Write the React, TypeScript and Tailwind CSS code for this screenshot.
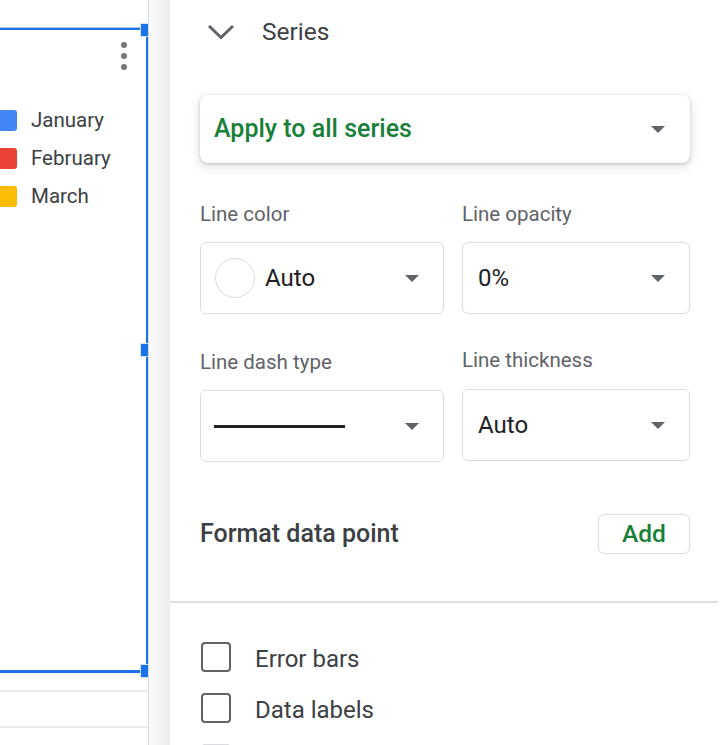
import { ReactNode } from "react";

const Caret = () => (
  <svg width="14" height="7" viewBox="0 0 14 7" className="shrink-0">
    <path d="M0 0 L14 0 L7 7 Z" fill="#5f6368" />
  </svg>
);

function SelectBox({ children, className }: { children: ReactNode; className?: string }) {
  return (
    <div
      className={`flex h-[72px] items-center justify-between rounded-[6px] border border-[#dadce0] bg-white pr-[24px] ${className ?? ""}`}
    >
      <div className="flex items-center">{children}</div>
      <Caret />
    </div>
  );
}

function Checkbox({ label, disabled }: { label: string; disabled?: boolean }) {
  return (
    <div className="flex h-[30px] items-center">
      <div
        className={`ml-[1px] h-[30px] w-[30px] rounded-[4px] border-[2.5px] ${
          disabled ? "border-[#dadce0]" : "border-[#5f6368]"
        }`}
      />
      <span className="ml-[24px] mt-[3px] text-[24px] leading-[30px] text-[#3c4043]">{label}</span>
    </div>
  );
}

const legend = [
  { name: "January", color: "bg-[#4285f4]" },
  { name: "February", color: "bg-[#ea4335]" },
  { name: "March", color: "bg-[#fbbc04]" },
];

export default function App() {
  return (
    <div
      className="flex h-[745px] w-[720px] overflow-hidden bg-white"
      style={{ fontFamily: "Roboto, 'Liberation Sans', sans-serif" }}
    >
      {/* sheet + chart */}
      <div className="relative h-full w-[149px] shrink-0 overflow-hidden border-r border-[#dadce0] bg-white">
        <div className="h-[28px] border-b border-[#a9c4f0]" />
        <div className="h-[645px] border-t-2 border-r-2 border-b-[3px] border-[#1a73e8]">
          <div className="flex justify-end pr-[19px] pt-[12px]">
            <div className="flex flex-col gap-[5px]">
              <div className="h-[6px] w-[6px] rounded-full bg-[#757575]" />
              <div className="h-[6px] w-[6px] rounded-full bg-[#757575]" />
              <div className="h-[6px] w-[6px] rounded-full bg-[#757575]" />
            </div>
          </div>
          <div className="mt-[40px] flex flex-col gap-[17px]">
            {legend.map((l) => (
              <div key={l.name} className="flex h-[21px] items-center">
                <div className={`ml-[-4px] h-[21px] w-[21px] rounded-[3px] ${l.color}`} />
                <span className="ml-[14px] text-[20.5px] leading-[21px] text-[#3c4043]">{l.name}</span>
              </div>
            ))}
          </div>
        </div>
        <div className="h-[19px] border-b-2 border-[#e8eaed]" />
        <div className="h-[36px] border-b-2 border-[#e8eaed]" />

        {/* resize handles */}
        <div className="absolute left-[140px] top-[23px] h-[14px] w-[14px] border border-[#d2e3fc] bg-[#1a73e8]" />
        <div className="absolute left-[140px] top-[343px] h-[14px] w-[14px] border border-[#d2e3fc] bg-[#1a73e8]" />
        <div className="absolute left-[140px] top-[664px] h-[14px] w-[14px] border border-[#d2e3fc] bg-[#1a73e8]" />
      </div>

      {/* panel shadow */}
      <div className="h-full w-[21px] shrink-0 bg-gradient-to-r from-[#fafafa] to-[#ededed]" />

      {/* editor panel */}
      <div className="flex-1 pl-[30px] pr-[30px]">
        <div className="flex h-[64px] items-center">
          <svg width="28" height="16" viewBox="0 0 28 16" className="ml-[7px]">
            <path d="M2 2 L14 13.5 L26 2" fill="none" stroke="#5f6368" strokeWidth="3" />
          </svg>
          <span className="ml-[27px] text-[24.5px] text-[#3c4043]">Series</span>
        </div>

        <div className="mt-[31px] flex h-[68px] items-center justify-between rounded-[8px] bg-white pl-[14px] pr-[25px] shadow-[0_1px_3px_rgba(60,64,67,0.25),0_3px_8px_2px_rgba(60,64,67,0.12)]">
          <span className="text-[25px] font-medium text-[#188038]">Apply to all series</span>
          <Caret />
        </div>

        <div className="grid grid-cols-[244px_228px] gap-x-[18px]">
          <div>
            <div className="mt-[39px] h-[24px] text-[20.5px] leading-[24px] text-[#5f6368]">Line color</div>
            <SelectBox className="mt-[16px] pl-[14px]">
              <div className="h-[40px] w-[40px] rounded-full border border-[#dadce0]" />
              <span className="ml-[10px] text-[24px] text-[#202124]">Auto</span>
            </SelectBox>
            <div className="mt-[36px] h-[24px] text-[20.5px] leading-[24px] text-[#5f6368]">Line dash type</div>
            <SelectBox className="mt-[16px] pl-[13px]">
              <div className="h-[3px] w-[131px] bg-[#202124]" />
            </SelectBox>
          </div>
          <div>
            <div className="mt-[39px] h-[24px] text-[20.5px] leading-[24px] text-[#5f6368]">Line opacity</div>
            <SelectBox className="mt-[16px] pl-[15px]">
              <span className="text-[24px] text-[#202124]">0%</span>
            </SelectBox>
            <div className="mt-[34px] h-[24px] text-[20.5px] leading-[24px] text-[#5f6368]">Line thickness</div>
            <SelectBox className="mt-[17px] pl-[15px]">
              <span className="text-[24px] text-[#202124]">Auto</span>
            </SelectBox>
          </div>
        </div>

        <div className="mt-[52px] flex h-[40px] items-center justify-between">
          <span className="text-[25px] font-medium text-[#3c4043]">Format data point</span>
          <button className="flex h-[40px] w-[92px] items-center justify-center rounded-[6px] border border-[#dadce0] text-[24.5px] font-medium text-[#188038]">
            Add
          </button>
        </div>

        <div className="-ml-[30px] -mr-[28px] mt-[47px] h-[2px] bg-[#e0e0e0]" />

        <div className="mt-[39px] flex flex-col gap-[21px]">
          <Checkbox label="Error bars" />
          <Checkbox label="Data labels" />
          <Checkbox label="" disabled />
        </div>
      </div>
    </div>
  );
}
